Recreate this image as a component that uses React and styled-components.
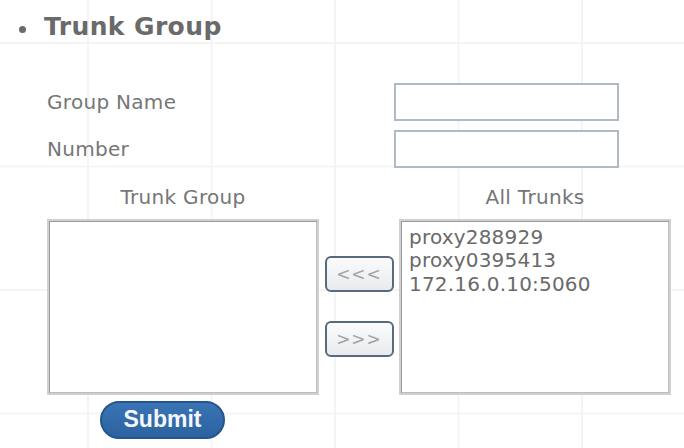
import React from "react";
import styled, { createGlobalStyle } from "styled-components";

const GlobalStyle = createGlobalStyle`
  html, body {
    margin: 0;
    padding: 0;
    background-color: #ffffff;
    background-image:
      linear-gradient(to right, #f4f4f4 0 2px, transparent 2px),
      linear-gradient(to bottom, #f4f4f4 0 2px, transparent 2px);
    background-size: 123.5px 123.5px;
    background-position: 87px 42px;
  }
  body {
    font-family: "DejaVu Sans", Verdana, sans-serif;
    width: 684px;
    height: 448px;
    overflow: hidden;
  }
`;

const Page = styled.div`
  width: 684px;
  height: 448px;
  box-sizing: border-box;
  padding-top: 12px;
`;

const Heading = styled.h2`
  margin: 0;
  display: flex;
  align-items: center;
  gap: 18px;
  padding-left: 19px;
  font-size: 25px;
  line-height: 30px;
  font-weight: bold;
  letter-spacing: 0.4px;
  color: #6a6a6a;
`;

const Bullet = styled.span`
  width: 7px;
  height: 7px;
  border-radius: 50%;
  background: #6a6a6a;
  margin-top: 5px;
`;

const Form = styled.div`
  padding-left: 47px;
`;

const Fields = styled.div`
  margin-top: 41px;
  display: grid;
  grid-template-columns: 347px 225px;
  row-gap: 9px;
  align-items: center;
`;

const Label = styled.label`
  font-size: 20px;
  letter-spacing: 0.3px;
  color: #767676;
`;

const TextInput = styled.input`
  box-sizing: border-box;
  width: 225px;
  height: 38px;
  border: 2px solid #b0bac4;
  background: #fff;
  margin: 0;
  padding: 2px 6px;
  font-size: 18px;
`;

const Columns = styled.div`
  display: grid;
  grid-template-columns: 272px 69px 272px;
  column-gap: 5.5px;
`;

const ColumnTitle = styled.div`
  margin-top: 17px;
  text-align: center;
  font-size: 20px;
  line-height: 24px;
  letter-spacing: 0.3px;
  color: #767676;
  grid-column: ${(p) => p.$col};
`;

const ListBox = styled.div`
  margin-top: 10px;
  box-sizing: border-box;
  height: 176px;
  border: 2px solid #d0d0d0;
  box-shadow: inset 1px 1px 0 #9c9c9c, inset -1px -1px 0 #bdbdbd;
  background: #fff;
  padding: 5px 8px;
  font-size: 20px;
  line-height: 23.3px;
  letter-spacing: 0.2px;
  color: #6a6a6a;
  grid-row: 2;
`;

const Option = styled.div`
  white-space: nowrap;
`;

const Movers = styled.div`
  grid-row: 2;
  margin-top: 10px;
  padding-top: 37px;
  display: flex;
  flex-direction: column;
  gap: 29px;
`;

const MoveButton = styled.button`
  box-sizing: border-box;
  width: 69px;
  height: 36px;
  margin: 0;
  padding: 0;
  border: 2px solid #586a7c;
  border-radius: 6px;
  background: linear-gradient(#fbfbfb, #e8ebee);
  color: #a3a3a3;
  font-family: "DejaVu Sans", Verdana, sans-serif;
  font-size: 17px;
  letter-spacing: 1px;
`;

const SubmitRow = styled.div`
  margin-top: 6px;
  padding-left: 53px;
`;

const SubmitButton = styled.button`
  box-sizing: border-box;
  width: 125px;
  height: 38px;
  margin: 0;
  padding: 0 0 2px;
  border: 2px solid #24568e;
  border-radius: 19px;
  background: linear-gradient(#3a74b4, #2c62a0);
  color: #f4f8fc;
  font-family: "Liberation Sans", Arial, sans-serif;
  font-weight: bold;
  font-size: 23px;
`;

const trunks = ["proxy288929", "proxy0395413", "172.16.0.10:5060"];

export default function App() {
  return (
    <>
      <GlobalStyle />
      <Page>
        <Heading>
          <Bullet />
          Trunk Group
        </Heading>
        <Form>
          <Fields>
            <Label htmlFor="gname">Group Name</Label>
            <TextInput id="gname" type="text" />
            <Label htmlFor="gnum">Number</Label>
            <TextInput id="gnum" type="text" />
          </Fields>
          <Columns>
            <ColumnTitle $col={1}>Trunk Group</ColumnTitle>
            <ColumnTitle $col={3}>All Trunks</ColumnTitle>
            <ListBox role="listbox" />
            <Movers>
              <MoveButton>&lt;&lt;&lt;</MoveButton>
              <MoveButton>&gt;&gt;&gt;</MoveButton>
            </Movers>
            <ListBox role="listbox">
              {trunks.map((t) => (
                <Option key={t} role="option">
                  {t}
                </Option>
              ))}
            </ListBox>
          </Columns>
          <SubmitRow>
            <SubmitButton>Submit</SubmitButton>
          </SubmitRow>
        </Form>
      </Page>
    </>
  );
}
